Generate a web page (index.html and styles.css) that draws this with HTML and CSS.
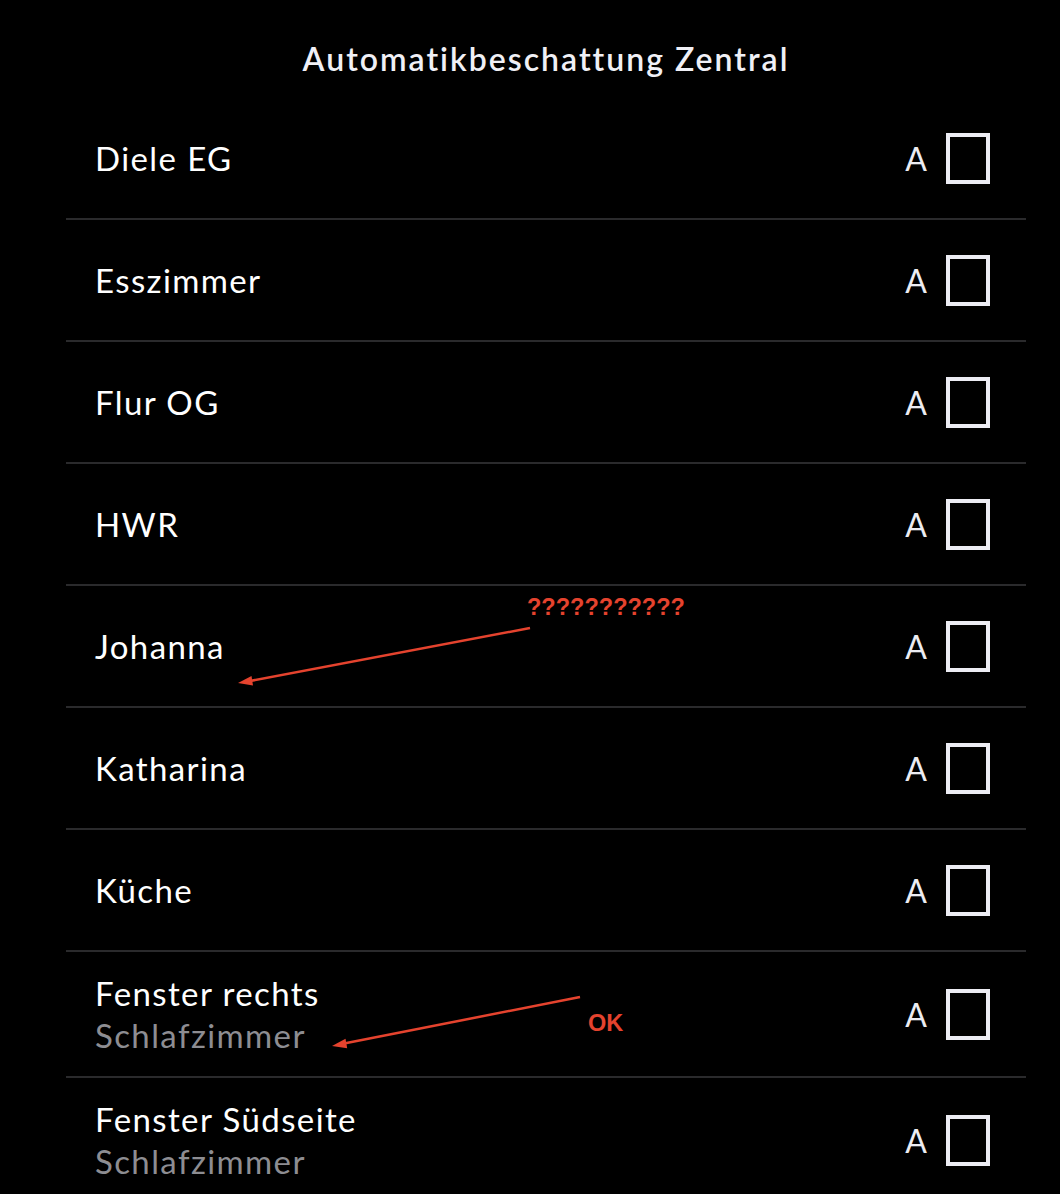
FILE: index.html
```html
<!DOCTYPE html>
<html lang="de">
<head>
<meta charset="utf-8">
<title>Automatikbeschattung Zentral</title>
<link rel="stylesheet" href="styles.css">
</head>
<body>
<div class="page">
  <h1 class="title">Automatikbeschattung Zentral</h1>
  <ul class="list">
    <li class="row"><div class="label"><span class="name">Diele EG</span></div><span class="mode">A</span><span class="box"></span></li>
    <li class="row"><div class="label"><span class="name">Esszimmer</span></div><span class="mode">A</span><span class="box"></span></li>
    <li class="row"><div class="label"><span class="name">Flur OG</span></div><span class="mode">A</span><span class="box"></span></li>
    <li class="row"><div class="label"><span class="name">HWR</span></div><span class="mode">A</span><span class="box"></span></li>
    <li class="row"><div class="label"><span class="name">Johanna</span></div><span class="mode">A</span><span class="box"></span></li>
    <li class="row"><div class="label"><span class="name">Katharina</span></div><span class="mode">A</span><span class="box"></span></li>
    <li class="row"><div class="label"><span class="name">Küche</span></div><span class="mode">A</span><span class="box"></span></li>
    <li class="row row-two"><div class="label"><span class="name">Fenster rechts</span><span class="sub">Schlafzimmer</span></div><span class="mode">A</span><span class="box"></span></li>
    <li class="row row-two"><div class="label"><span class="name">Fenster Südseite</span><span class="sub">Schlafzimmer</span></div><span class="mode">A</span><span class="box"></span></li>
  </ul>
</div>
<svg class="notes" width="1060" height="1194" viewBox="0 0 1060 1194" xmlns="http://www.w3.org/2000/svg">
  <text class="note-text" x="527" y="615">???????????</text>
  <line class="note-line" x1="530" y1="628" x2="250" y2="681"/>
  <polygon class="note-head" points="238,683 251.5,676 253,685.5"/>
  <text class="note-text" x="588" y="1031">OK</text>
  <line class="note-line" x1="580" y1="997" x2="344" y2="1043.5"/>
  <polygon class="note-head" points="332,1046 345.5,1038.8 347.2,1048.3"/>
</svg>
</body>
</html>
```
FILE: styles.css
```css
html, body {
  margin: 0;
  padding: 0;
  background: #000;
}

body {
  width: 1060px;
  height: 1194px;
  overflow: hidden;
  position: relative;
  font-family: "Lato", "Noto Sans", "Liberation Sans", sans-serif;
  color: #fff;
}

.page {
  width: 960px;
  margin-left: 66px;
}

.title {
  margin: 0;
  height: 98px;
  box-sizing: border-box;
  padding-top: 37px;
  line-height: 44px;
  text-align: center;
  font-size: 32px;
  font-weight: 600;
  letter-spacing: 2px;
  color: #f0f0f6;
}

.list {
  list-style: none;
  margin: 0;
  padding: 0;
}

.row {
  display: flex;
  align-items: center;
  height: 122px;
  box-sizing: border-box;
  border-bottom: 2px solid #2a2a2c;
  padding: 0 36px 0 29px;
}

.row-two {
  height: 126px;
}

.label {
  flex: 1;
  display: flex;
  flex-direction: column;
}

.name {
  font-size: 33px;
  line-height: 42px;
  letter-spacing: 1.4px;
  color: #fff;
}

.sub {
  font-size: 33px;
  line-height: 42px;
  letter-spacing: 1.4px;
  color: #8d8d92;
}

.mode {
  font-size: 32px;
  color: #ececf2;
  margin-right: 19px;
}

.box {
  width: 44px;
  height: 51px;
  box-sizing: border-box;
  border: 4px solid #ececf3;
}

.notes {
  position: absolute;
  left: 0;
  top: 0;
  pointer-events: none;
}

.note-line {
  stroke: #e5432e;
  stroke-width: 2.5;
}

.note-head {
  fill: #e5432e;
}

.note-text {
  fill: #e5432e;
  font-family: "Liberation Sans", Arial, sans-serif;
  font-weight: bold;
  font-size: 23.5px;
}
```
